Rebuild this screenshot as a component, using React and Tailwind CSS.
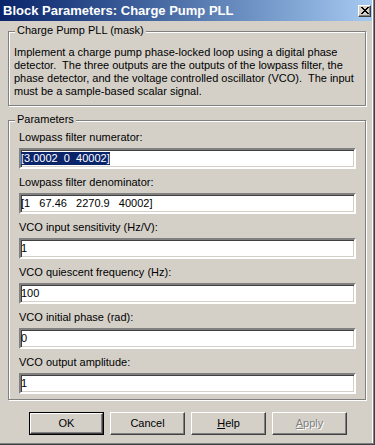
import React from "react";

function Field({ label, children }) {
  return (
    <div className="flex flex-col">
      <div className="h-[13px] leading-[13px] mb-[4px] whitespace-pre">{label}</div>
      <div className="w-[337px] h-[21px] bg-white border-2 border-t-[#808080] border-l-[#808080] border-b-white border-r-white shadow-[inset_1px_1px_0_#404040,inset_-1px_-1px_0_#d4d0c8] flex items-center whitespace-pre leading-[13px] text-black">
        {children}
      </div>
    </div>
  );
}

function Button({ children, def, disabled }) {
  return (
    <div
      className={
        "w-[75px] h-[23px] flex items-center justify-center " +
        (def
          ? "border border-black"
          : "")
      }
    >
      <div
        className={
          "w-full h-full flex items-center justify-center border border-t-white border-l-white border-b-[#404040] border-r-[#404040] shadow-[inset_-1px_-1px_0_#808080] " +
          (disabled ? "text-[#808080] [text-shadow:1px_1px_0_#fff]" : "text-black")
        }
      >
        {children}
      </div>
    </div>
  );
}

export default function App() {
  return (
    <div
      className="w-[375px] h-[445px] bg-[#d4d0c8] border-r border-b border-[#404040] overflow-hidden text-[11px] text-black"
      style={{ fontFamily: '"Liberation Sans", Arial, sans-serif' }}
    >
      <div className="h-full border-r border-b border-[#808080]">
        <div className="h-full border-r border-white flex flex-col">
          {/* title bar */}
          <div className="h-[21px] shrink-0 flex items-center bg-linear-to-r from-[#0a246a] to-[#a6caf0]">
            <span className="pl-[3px] text-white font-bold text-[13px] leading-[14px]">
              Block Parameters: Charge Pump PLL
            </span>
            <div className="ml-auto mr-[1px] w-[13px] h-[12px] bg-[#d4d0c8] border border-t-white border-l-white border-b-[#404040] border-r-[#404040] shadow-[inset_-1px_-1px_0_#808080] flex items-center justify-center">
              <svg width="8" height="7" viewBox="0 0 8 7" shapeRendering="crispEdges">
                <path d="M0 0h2v1H0zM6 0h2v1H6zM1 1h2v1H1zM5 1h2v1H5zM2 2h4v1H2zM3 3h2v1H3zM2 4h4v1H2zM1 5h2v1H1zM5 5h2v1H5zM0 6h2v1H0zM6 6h2v1H6z" fill="#000" />
              </svg>
            </div>
          </div>

          {/* mask group */}
          <div className="relative mt-[10px] ml-[8px] w-[358px] h-[75px] shrink-0 border border-[#808080] shadow-[inset_1px_1px_0_#fff,1px_1px_0_#fff] pt-[14px] pl-[5px]">
            <span className="absolute left-[6px] -top-[8px] px-[2px] bg-[#d4d0c8] leading-[13px]">
              Charge Pump PLL (mask)
            </span>
            <div className="leading-[13px] whitespace-pre">
              {"Implement a charge pump phase-locked loop using a digital phase\ndetector.  The three outputs are the outputs of the lowpass filter, the\nphase detector, and the voltage controlled oscillator (VCO).  The input\nmust be a sample-based scalar signal."}
            </div>
          </div>

          {/* parameters group */}
          <div className="relative mt-[14px] ml-[8px] w-[358px] h-[280px] shrink-0 border border-[#808080] shadow-[inset_1px_1px_0_#fff,1px_1px_0_#fff] pt-[10px] pl-[10px] flex flex-col gap-[7px]">
            <span className="absolute left-[6px] -top-[8px] px-[2px] bg-[#d4d0c8] leading-[13px]">
              Parameters
            </span>
            <Field label="Lowpass filter numerator:">
              <span className="bg-[#0a246a] text-white">{"[3.0002  0  40002]"}</span>
            </Field>
            <Field label="Lowpass filter denominator:">{"[1   67.46   2270.9   40002]"}</Field>
            <Field label="VCO input sensitivity (Hz/V):">1</Field>
            <Field label="VCO quiescent frequency (Hz):">100</Field>
            <Field label="VCO initial phase (rad):">0</Field>
            <Field label="VCO output amplitude:">1</Field>
          </div>

          {/* buttons */}
          <div className="mt-[12px] pl-[29px] flex gap-[6px]">
            <Button def>OK</Button>
            <Button>Cancel</Button>
            <Button>
              <span>
                <span className="underline">H</span>elp
              </span>
            </Button>
            <Button disabled>
              <span>
                <span className="underline">A</span>pply
              </span>
            </Button>
          </div>
        </div>
      </div>
    </div>
  );
}
